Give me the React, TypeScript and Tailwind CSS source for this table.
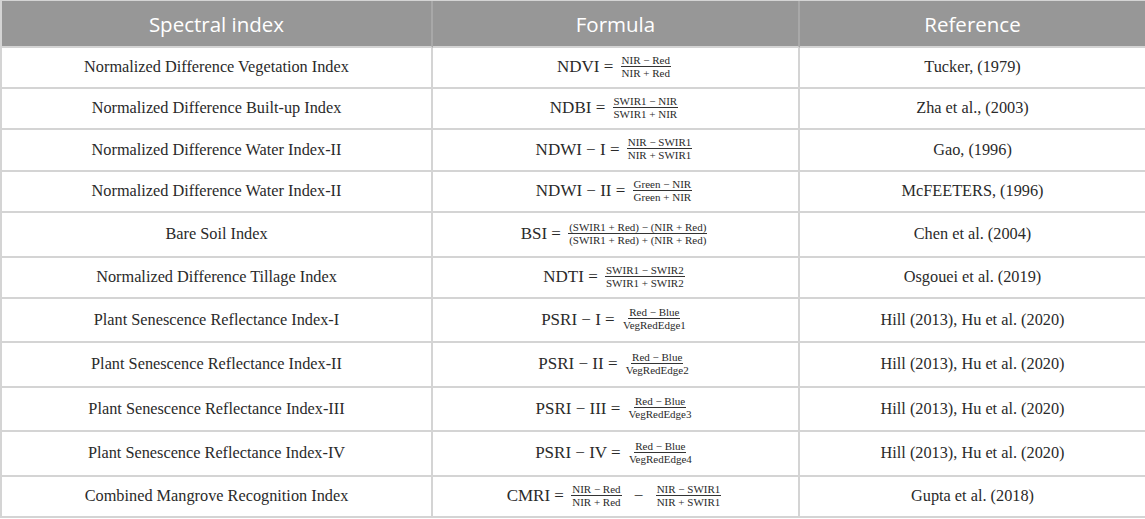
import React from "react";

type Row = { name: string; formula: React.ReactNode; ref: string; h: string };

const Frac = ({ n, d }: { n: string; d: string }) => (
  <span className="inline-flex flex-col items-center align-middle text-[11px] leading-[12px] mx-[3px] relative top-[-2px]">
    <span className="px-[1px] border-b border-[#333] whitespace-pre">{n}</span>
    <span className="px-[1px] whitespace-pre">{d}</span>
  </span>
);

const F = ({ lhs, n, d }: { lhs: string; n: string; d: string }) => (
  <span className="whitespace-nowrap">
    {lhs} = <Frac n={n} d={d} />
  </span>
);

const rows: Row[] = [
  { name: "Normalized Difference Vegetation Index", formula: <F lhs="NDVI" n="NIR − Red" d="NIR + Red" />, ref: "Tucker, (1979)", h: "h-[41px]" },
  { name: "Normalized Difference Built-up Index", formula: <F lhs="NDBI" n="SWIR1 − NIR" d="SWIR1 + NIR" />, ref: "Zha et al., (2003)", h: "h-[41px]" },
  { name: "Normalized Difference Water Index-II", formula: <F lhs="NDWI − I" n="NIR − SWIR1" d="NIR + SWIR1" />, ref: "Gao, (1996)", h: "h-[42px]" },
  { name: "Normalized Difference Water Index-II", formula: <F lhs="NDWI − II" n="Green − NIR" d="Green + NIR" />, ref: "McFEETERS, (1996)", h: "h-[41px]" },
  { name: "Bare Soil Index", formula: <F lhs="BSI" n="(SWIR1 + Red) − (NIR + Red)" d="(SWIR1 + Red) + (NIR + Red)" />, ref: "Chen et al. (2004)", h: "h-[45px]" },
  { name: "Normalized Difference Tillage Index", formula: <F lhs="NDTI" n="SWIR1 − SWIR2" d="SWIR1 + SWIR2" />, ref: "Osgouei et al. (2019)", h: "h-[41px]" },
  { name: "Plant Senescence Reflectance Index-I", formula: <F lhs="PSRI − I" n="Red − Blue" d="VegRedEdge1" />, ref: "Hill (2013), Hu et al. (2020)", h: "h-[44px]" },
  { name: "Plant Senescence Reflectance Index-II", formula: <F lhs="PSRI − II" n="Red − Blue" d="VegRedEdge2" />, ref: "Hill (2013), Hu et al. (2020)", h: "h-[45px]" },
  { name: "Plant Senescence Reflectance Index-III", formula: <F lhs="PSRI − III" n="Red − Blue" d="VegRedEdge3" />, ref: "Hill (2013), Hu et al. (2020)", h: "h-[44px]" },
  { name: "Plant Senescence Reflectance Index-IV", formula: <F lhs="PSRI − IV" n="Red − Blue" d="VegRedEdge4" />, ref: "Hill (2013), Hu et al. (2020)", h: "h-[45px]" },
  {
    name: "Combined Mangrove Recognition Index",
    formula: (
      <span className="whitespace-nowrap">
        CMRI = <Frac n="NIR − Red" d="NIR + Red" /> <span className="mx-[5px]">−</span> <Frac n="NIR − SWIR1" d="NIR + SWIR1" />
      </span>
    ),
    ref: "Gupta et al. (2018)",
    h: "h-[41px]",
  },
];

export default function App() {
  const cell = "flex items-center justify-center border-r-2 border-b-2 border-[#d4d4d4]";
  const head = `${cell} h-[47px] pt-[2px] bg-[#979797] border-b-0 border-r-[#a8a8a8] text-white text-[20.5px] [font-family:'Open_Sans',sans-serif]`;
  return (
    <div className="w-[1145px] h-[519px] bg-white overflow-hidden">
      <div className="grid grid-cols-[431px_367px_347px] border-l-2 border-t border-[#d4d4d4] text-[#2a2a2a] [font-family:'Liberation_Serif',serif]">
        <div className={head}>Spectral index</div>
        <div className={head}>Formula</div>
        <div className={head}>Reference</div>
        {rows.map((r, i) => (
          <React.Fragment key={i}>
            <div className={`${cell} ${r.h} text-[16.3px]`}>{r.name}</div>
            <div className={`${cell} ${r.h} text-[17px]`}>{r.formula}</div>
            <div className={`${cell} ${r.h} text-[16.3px]`}>{r.ref}</div>
          </React.Fragment>
        ))}
      </div>
    </div>
  );
}
